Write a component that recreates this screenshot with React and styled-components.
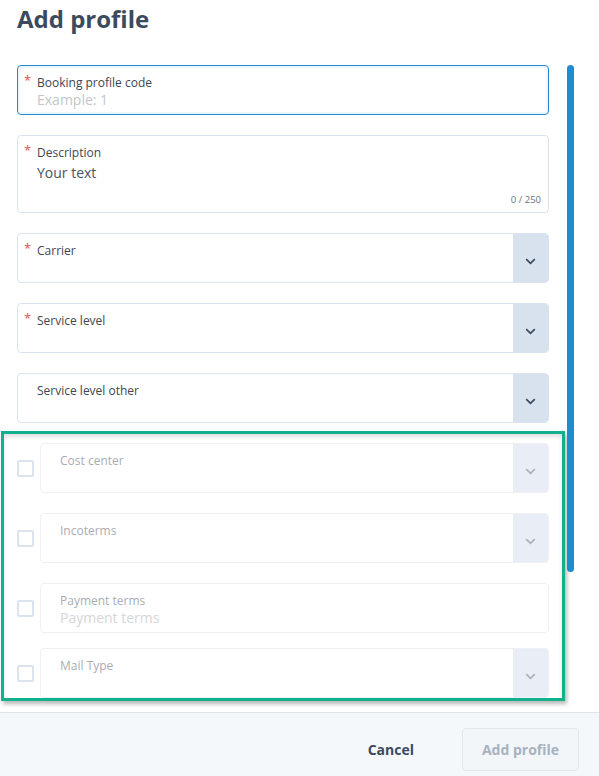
import styled, { createGlobalStyle } from "styled-components";

const GlobalStyle = createGlobalStyle`
  html, body {
    margin: 0;
    padding: 0;
    background: #ffffff;
    font-family: "Open Sans", "Noto Sans", sans-serif;
  }
`;

const Chevron = ({ color }) => (
  <svg width="11" height="7" viewBox="0 0 11 7" fill="none">
    <path d="M1.2 1.2 L5.5 5.3 L9.8 1.2" stroke={color} strokeWidth="1.7" />
  </svg>
);

const Field = ({ label, required, placeholder, value, dropdown, disabled, focused, tall, counter }) => (
  <FieldBox $disabled={disabled} $focused={focused} $tall={tall}>
    <FieldBody>
      {required && <Asterisk>*</Asterisk>}
      <Label $disabled={disabled}>{label}</Label>
      {placeholder && <Placeholder $disabled={disabled}>{placeholder}</Placeholder>}
      {value && <Value>{value}</Value>}
      {counter && <Counter>{counter}</Counter>}
    </FieldBody>
    {dropdown && (
      <DropButton $disabled={disabled}>
        <Chevron color={disabled ? "#a9b1bd" : "#3b4a5e"} />
      </DropButton>
    )}
  </FieldBox>
);

const OptionalRow = ({ mt, ...props }) => (
  <Row $mt={mt}>
    <Checkbox />
    <Field disabled {...props} />
  </Row>
);

export default function App() {
  return (
    <>
      <GlobalStyle />
      <Page>
        <ScrollArea>
          <Main>
            <Title>Add profile</Title>
            <Form>
              <Field required focused label="Booking profile code" placeholder="Example: 1" />
              <Field required tall label="Description" value="Your text" counter="0 / 250" />
              <Field required dropdown label="Carrier" />
              <Field required dropdown label="Service level" />
              <Field dropdown label="Service level other" />
              <Highlight>
                <OptionalRow mt={0} dropdown label="Cost center" />
                <OptionalRow mt={20} dropdown label="Incoterms" />
                <OptionalRow mt={20} label="Payment terms" placeholder="Payment terms" />
                <OptionalRow mt={15} dropdown label="Mail Type" />
              </Highlight>
            </Form>
          </Main>
          <Scrollbar />
        </ScrollArea>
        <Footer>
          <CancelButton>Cancel</CancelButton>
          <SubmitButton disabled>Add profile</SubmitButton>
        </Footer>
      </Page>
    </>
  );
}

const Page = styled.div`
  width: 599px;
  height: 776px;
  display: flex;
  flex-direction: column;
  overflow: hidden;
`;

const ScrollArea = styled.div`
  flex: 1;
  display: flex;
  align-items: flex-start;
  padding-left: 17px;
  overflow: hidden;
`;

const Main = styled.div`
  width: 532px;
  flex-shrink: 0;
  display: flex;
  flex-direction: column;
`;

const Title = styled.h1`
  margin: 0;
  height: 65px;
  flex-shrink: 0;
  font-size: 24px;
  line-height: 37px;
  font-weight: 700;
  color: #3c4a5e;
`;

const Form = styled.div`
  display: flex;
  flex-direction: column;
  gap: 20px;
`;

const FieldBox = styled.div`
  box-sizing: border-box;
  flex: 1 0 auto;
  display: flex;
  height: ${({ $tall }) => ($tall ? "78px" : "50px")};
  border: 1px solid
    ${({ $focused, $disabled }) => ($focused ? "#1e8bd0" : $disabled ? "#edf1f6" : "#dbe3ee")};
  border-radius: 4px;
  background: #ffffff;
  box-shadow: ${({ $focused }) => ($focused ? "inset 0 0 0 2px #eef6fc" : "none")};
  overflow: hidden;
`;

const FieldBody = styled.div`
  position: relative;
  flex: 1;
  display: flex;
  flex-direction: column;
  padding: 8px 0 0 19px;
`;

const Asterisk = styled.span`
  position: absolute;
  left: 6px;
  top: 7px;
  font-size: 13px;
  line-height: 14px;
  color: #d9534f;
`;

const Label = styled.span`
  font-size: 12px;
  line-height: 17px;
  color: ${({ $disabled }) => ($disabled ? "#a8adb5" : "#3e4650")};
`;

const Placeholder = styled.span`
  font-size: 14px;
  line-height: 18px;
  color: ${({ $disabled }) => ($disabled ? "#d3d6db" : "#c3c6cb")};
`;

const Value = styled.span`
  margin-top: 2px;
  font-size: 14px;
  line-height: 20px;
  color: #48525e;
`;

const Counter = styled.span`
  position: absolute;
  right: 7px;
  bottom: 6px;
  font-size: 9.5px;
  color: #6b7480;
`;

const DropButton = styled.div`
  width: 35px;
  display: flex;
  align-items: center;
  justify-content: center;
  padding-top: 6px;
  box-sizing: border-box;
  background: ${({ $disabled }) => ($disabled ? "#e9eef6" : "#d8e1ee")};
`;

const Highlight = styled.div`
  margin: -12px -16px 0 -16px;
  padding: 9px 13px 0 13px;
  border: 3px solid #12b08c;
  box-shadow: 2px 3px 4px rgba(0, 0, 0, 0.28), inset 0 3px 4px rgba(0, 0, 0, 0.12);
  display: flex;
  flex-direction: column;
`;

const Row = styled.div`
  display: flex;
  align-items: center;
  gap: 6px;
  margin-top: ${({ $mt }) => $mt}px;
`;

const Checkbox = styled.span`
  box-sizing: border-box;
  flex-shrink: 0;
  width: 17px;
  height: 17px;
  border: 2px solid #dbe3ef;
  border-radius: 2px;
  background: #ffffff;
`;

const Scrollbar = styled.div`
  flex-shrink: 0;
  width: 7px;
  height: 507px;
  margin: 65px 0 0 18px;
  border-radius: 4px;
  background: #1e8dd0;
`;

const Footer = styled.div`
  flex-shrink: 0;
  height: 64px;
  box-sizing: border-box;
  border-top: 1px solid #dfe4ea;
  background: #f5f8fb;
  display: flex;
  align-items: flex-start;
  justify-content: flex-end;
  padding: 15px 20px 0 0;
  gap: 24px;
`;

const CancelButton = styled.button`
  height: 43px;
  border: none;
  background: none;
  padding: 0 24px;
  font-family: inherit;
  font-size: 14px;
  font-weight: 700;
  color: #3b4a5e;
`;

const SubmitButton = styled.button`
  width: 117px;
  height: 43px;
  border: 1px solid #e2e7ee;
  border-radius: 4px;
  background: #f3f6f9;
  font-family: inherit;
  font-size: 14px;
  font-weight: 700;
  color: #a8b2bf;
`;
